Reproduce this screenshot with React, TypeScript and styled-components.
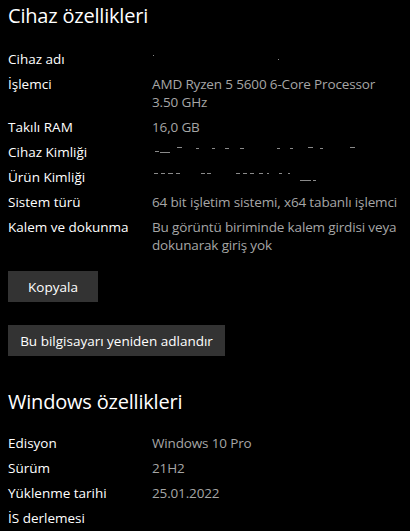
import React from "react";
import styled, { createGlobalStyle } from "styled-components";

const GlobalStyle = createGlobalStyle`
  html, body { margin: 0; padding: 0; background: #000; }
  body { font-family: "Open Sans", "Noto Sans", "Liberation Sans", sans-serif; color: #fff; }
`;

const Page = styled.div`
  width: 410px;
  height: 531px;
  overflow: hidden;
  background: #000;
  padding: 0 8px;
  box-sizing: border-box;
`;

const SectionTitle = styled.h2<{ $top: number }>`
  margin: ${(p) => p.$top}px 0 0 0;
  font-size: 20px;
  font-weight: 400;
  line-height: 28px;
  color: #fff;
  letter-spacing: -0.2px;
`;

const InfoGrid = styled.dl<{ $top: number }>`
  display: grid;
  grid-template-columns: 144px 1fr;
  row-gap: 7px;
  margin: ${(p) => p.$top}px 0 0 0;
  font-size: 13.5px;
  line-height: 18px;
`;

const Label = styled.dt`
  margin: 0;
  color: #fff;
  white-space: nowrap;
`;

const Value = styled.dd`
  margin: 0;
  color: #a6a6a6;
  min-height: 18px;
  white-space: nowrap;
  letter-spacing: -0.15px;
`;

const Button = styled.button<{ $top: number; $width: number }>`
  display: block;
  margin: ${(p) => p.$top}px 0 0 0;
  width: ${(p) => p.$width}px;
  height: 31px;
  border: none;
  background: #333333;
  color: #fff;
  font-family: inherit;
  font-size: 13.5px;
  padding: 0;
  cursor: pointer;
`;

const Specks = ({ marks }: { marks: [number, number, number][] }) => (
  <svg width="250" height="18" style={{ display: "block" }}>
    {marks.map(([x, y, w], i) => (
      <rect key={i} x={x} y={y} width={w} height={1} fill="#8a8a8a" />
    ))}
  </svg>
);

const nameMarks: [number, number, number][] = [
  [1, 5, 1],
  [126, 9, 1],
];
const deviceMarks: [number, number, number][] = [
  [3, 8, 4],
  [8, 9, 10],
  [25, 4, 5],
  [44, 5, 3],
  [60, 5, 3],
  [73, 5, 4],
  [88, 5, 4],
  [125, 5, 3],
  [138, 5, 3],
  [156, 4, 5],
  [168, 5, 3],
  [198, 4, 5],
];
const productMarks: [number, number, number][] = [
  [2, 5, 4],
  [9, 5, 4],
  [16, 5, 5],
  [24, 5, 4],
  [49, 5, 4],
  [55, 5, 4],
  [84, 5, 4],
  [91, 5, 4],
  [98, 5, 4],
  [107, 5, 4],
  [115, 5, 2],
  [127, 5, 3],
  [136, 5, 2],
  [148, 12, 11],
  [161, 12, 3],
];

export default function App() {
  return (
    <>
      <GlobalStyle />
      <Page>
        <SectionTitle $top={2}>Cihaz özellikleri</SectionTitle>
        <InfoGrid $top={20}>
          <Label>Cihaz adı</Label>
          <Value>
            <Specks marks={nameMarks} />
          </Value>
          <Label>İşlemci</Label>
          <Value>
            AMD Ryzen 5 5600 6-Core Processor
            <br />
            3.50 GHz
          </Value>
          <Label>Takılı RAM</Label>
          <Value>16,0 GB</Value>
          <Label>Cihaz Kimliği</Label>
          <Value>
            <Specks marks={deviceMarks} />
          </Value>
          <Label>Ürün Kimliği</Label>
          <Value>
            <Specks marks={productMarks} />
          </Value>
          <Label>Sistem türü</Label>
          <Value>64 bit işletim sistemi, x64 tabanlı işlemci</Value>
          <Label>Kalem ve dokunma</Label>
          <Value>
            Bu görüntü biriminde kalem girdisi veya
            <br />
            dokunarak giriş yok
          </Value>
        </InfoGrid>
        <Button $top={17} $width={90}>Kopyala</Button>
        <Button $top={23} $width={217}>Bu bilgisayarı yeniden adlandır</Button>
        <SectionTitle $top={32}>Windows özellikleri</SectionTitle>
        <InfoGrid $top={18}>
          <Label>Edisyon</Label>
          <Value>Windows 10 Pro</Value>
          <Label>Sürüm</Label>
          <Value>21H2</Value>
          <Label>Yüklenme tarihi</Label>
          <Value>25.01.2022</Value>
          <Label>İS derlemesi</Label>
          <Value />
        </InfoGrid>
      </Page>
    </>
  );
}
